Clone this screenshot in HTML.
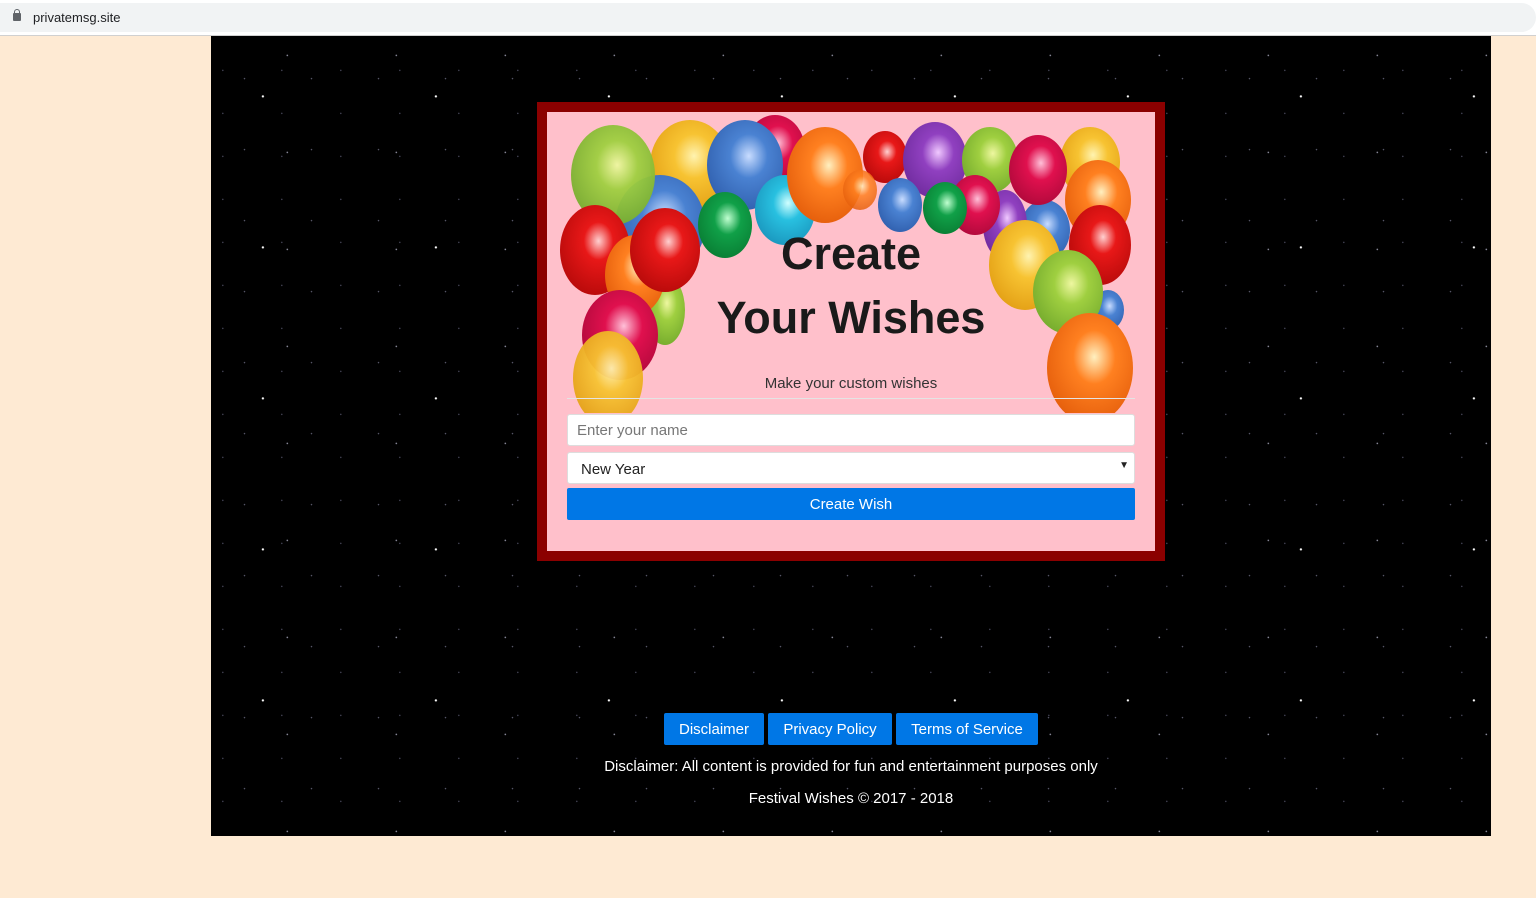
<!DOCTYPE html>
<html><head><meta charset="utf-8">
<style>
*{margin:0;padding:0;box-sizing:border-box}
html,body{width:1536px;height:898px;overflow:hidden;background:#feead3;font-family:"Liberation Sans",Arial,sans-serif}
#bar{position:absolute;left:0;top:0;width:1536px;height:36px;background:#fff;border-bottom:1px solid #d0d0d0}
#pill{position:absolute;left:0;top:3px;width:1536px;height:29px;background:#f1f3f4;border-radius:0 15px 15px 0}
#url{position:absolute;left:33px;top:10px;font-size:13px;color:#202124}
#lock{position:absolute;left:13px;top:13px;width:8px;height:8px;background:#5f6368;border-radius:1px}
#lock:before{content:"";position:absolute;left:1px;top:-4px;width:4px;height:4px;border:1px solid #5f6368;border-bottom:none;border-radius:3px 3px 0 0}
#sky{position:absolute;left:211px;top:36px;width:1280px;height:800px;background-color:#000;
background-image:
radial-gradient(circle at 30% 40%,#fff 0.7px,transparent 1.5px),
radial-gradient(circle at 70% 20%,#889 0.5px,transparent 1.1px),
radial-gradient(circle at 50% 60%,#556 0.5px,transparent 1px),
radial-gradient(circle at 20% 80%,#445 0.5px,transparent 1px);
background-size:173px 151px,109px 97px,67px 71px,59px 43px}
#card{position:absolute;left:537px;top:102px;width:628px;height:459px;background:#8b0000;padding:10px}
#inner{position:relative;width:608px;height:439px;background:#ffc0cb}
#balloons{position:absolute;left:0;top:0}
h1{position:absolute;left:0;width:608px;text-align:center;font-size:45px;font-weight:bold;color:#1a1a1a}
#sub{position:absolute;top:263px;width:608px;text-align:center;font-size:15px;color:#333}
#hr{position:absolute;left:20px;top:286px;width:568px;height:1px;background:#e4e4e4}
.in{position:absolute;left:20px;width:568px;height:32px;background:#fff;border:1px solid #ddd;border-radius:3px;font-size:15px}
#btn{position:absolute;left:20px;top:376px;width:568px;height:32px;background:#0077e6;color:#fff;text-align:center;line-height:34px;font-size:15px;border-radius:2px}
.fb{position:absolute;top:713px;height:32px;background:#0077e6;color:#fff;font-size:15px;line-height:34px;text-align:center;border-radius:2px}
.ft{position:absolute;left:211px;width:1280px;text-align:center;color:#fff;font-size:15px}
</style></head><body>
<div id="bar"><div id="pill"></div><div id="lock"></div><div id="url">privatemsg.site</div></div>
<div id="sky"></div>
<div id="card"><div id="inner">
<svg id="balloons" width="608" height="301" viewBox="547 112 608 301">
<defs>
<radialGradient id="g" cx="0.55" cy="0.4" r="0.7"><stop offset="0" stop-color="#eef7a0"/><stop offset="0.35" stop-color="#9fcf40"/><stop offset="1" stop-color="#6ea52a"/></radialGradient>
<radialGradient id="y" cx="0.55" cy="0.4" r="0.7"><stop offset="0" stop-color="#fff3b0"/><stop offset="0.35" stop-color="#f7c332"/><stop offset="1" stop-color="#e09a10"/></radialGradient>
<radialGradient id="b" cx="0.55" cy="0.4" r="0.7"><stop offset="0" stop-color="#c8dcff"/><stop offset="0.35" stop-color="#4a82d2"/><stop offset="1" stop-color="#2c5aa8"/></radialGradient>
<radialGradient id="r" cx="0.55" cy="0.4" r="0.7"><stop offset="0" stop-color="#ffd0d0"/><stop offset="0.3" stop-color="#e81818"/><stop offset="1" stop-color="#b00808"/></radialGradient>
<radialGradient id="c" cx="0.55" cy="0.4" r="0.7"><stop offset="0" stop-color="#ffc0d8"/><stop offset="0.35" stop-color="#e0104e"/><stop offset="1" stop-color="#a80838"/></radialGradient>
<radialGradient id="o" cx="0.55" cy="0.4" r="0.7"><stop offset="0" stop-color="#fff0c0"/><stop offset="0.35" stop-color="#ff8020"/><stop offset="1" stop-color="#e05808"/></radialGradient>
<radialGradient id="p" cx="0.55" cy="0.4" r="0.7"><stop offset="0" stop-color="#f0c8ff"/><stop offset="0.35" stop-color="#9040c0"/><stop offset="1" stop-color="#6a2898"/></radialGradient>
<radialGradient id="d" cx="0.55" cy="0.4" r="0.7"><stop offset="0" stop-color="#c0ffd0"/><stop offset="0.35" stop-color="#10a048"/><stop offset="1" stop-color="#087830"/></radialGradient>
<radialGradient id="k" cx="0.55" cy="0.4" r="0.7"><stop offset="0" stop-color="#d0ffff"/><stop offset="0.35" stop-color="#28c0e0"/><stop offset="1" stop-color="#1890b8"/></radialGradient>
</defs>
<ellipse cx="775" cy="150" rx="30" ry="35" fill="url(#c)"/>
<ellipse cx="690" cy="165" rx="40" ry="45" fill="url(#y)"/>
<ellipse cx="660" cy="225" rx="45" ry="50" fill="url(#b)"/>
<ellipse cx="613" cy="175" rx="42" ry="50" fill="url(#g)" opacity="0.95"/>
<ellipse cx="745" cy="165" rx="38" ry="45" fill="url(#b)"/>
<ellipse cx="785" cy="210" rx="30" ry="35" fill="url(#k)"/>
<ellipse cx="825" cy="175" rx="38" ry="48" fill="url(#o)"/>
<ellipse cx="885" cy="157" rx="22" ry="26" fill="url(#r)"/>
<ellipse cx="935" cy="160" rx="32" ry="38" fill="url(#p)"/>
<ellipse cx="860" cy="190" rx="17" ry="20" fill="url(#o)" opacity="0.85"/>
<ellipse cx="990" cy="160" rx="28" ry="33" fill="url(#g)"/>
<ellipse cx="1045" cy="230" rx="25" ry="30" fill="url(#b)"/>
<ellipse cx="1005" cy="225" rx="22" ry="35" fill="url(#p)"/>
<ellipse cx="975" cy="205" rx="25" ry="30" fill="url(#c)"/>
<ellipse cx="900" cy="205" rx="22" ry="27" fill="url(#b)"/>
<ellipse cx="945" cy="208" rx="22" ry="26" fill="url(#d)"/>
<ellipse cx="1090" cy="162" rx="30" ry="35" fill="url(#y)"/>
<ellipse cx="1038" cy="170" rx="29" ry="35" fill="url(#c)"/>
<ellipse cx="1098" cy="200" rx="33" ry="40" fill="url(#o)"/>
<ellipse cx="1100" cy="245" rx="31" ry="40" fill="url(#r)"/>
<ellipse cx="1108" cy="310" rx="16" ry="20" fill="url(#b)"/>
<ellipse cx="1025" cy="265" rx="36" ry="45" fill="url(#y)"/>
<ellipse cx="1068" cy="292" rx="35" ry="42" fill="url(#g)"/>
<ellipse cx="1090" cy="368" rx="43" ry="55" fill="url(#o)"/>
<ellipse cx="595" cy="250" rx="35" ry="45" fill="url(#r)"/>
<ellipse cx="665" cy="310" rx="20" ry="35" fill="url(#g)"/>
<ellipse cx="635" cy="275" rx="30" ry="40" fill="url(#o)"/>
<ellipse cx="665" cy="250" rx="35" ry="42" fill="url(#r)"/>
<ellipse cx="725" cy="225" rx="27" ry="33" fill="url(#d)"/>
<ellipse cx="620" cy="335" rx="38" ry="45" fill="url(#c)"/>
<ellipse cx="608" cy="378" rx="35" ry="47" fill="url(#y)" opacity="0.95"/>
</svg>
<h1 style="top:116px">Create</h1>
<h1 style="top:180px">Your Wishes</h1>
<div id="sub">Make your custom wishes</div>
<div id="hr"></div>
<div class="in" style="top:302px;padding:7px 9px;color:#777">Enter your name</div>
<div class="in" style="top:340px;padding:8px 13px;color:#222">New Year<span style="position:absolute;right:5px;top:7px;font-size:10px">&#9660;</span></div>
<div id="btn">Create Wish</div>
</div></div>
<div class="fb" style="left:664px;width:100px">Disclaimer</div>
<div class="fb" style="left:768px;width:124px">Privacy Policy</div>
<div class="fb" style="left:896px;width:142px">Terms of Service</div>
<div class="ft" style="top:758px">Disclaimer: All content is provided for fun and entertainment purposes only</div>
<div class="ft" style="top:790px">Festival Wishes © 2017 - 2018</div>
</body></html>
